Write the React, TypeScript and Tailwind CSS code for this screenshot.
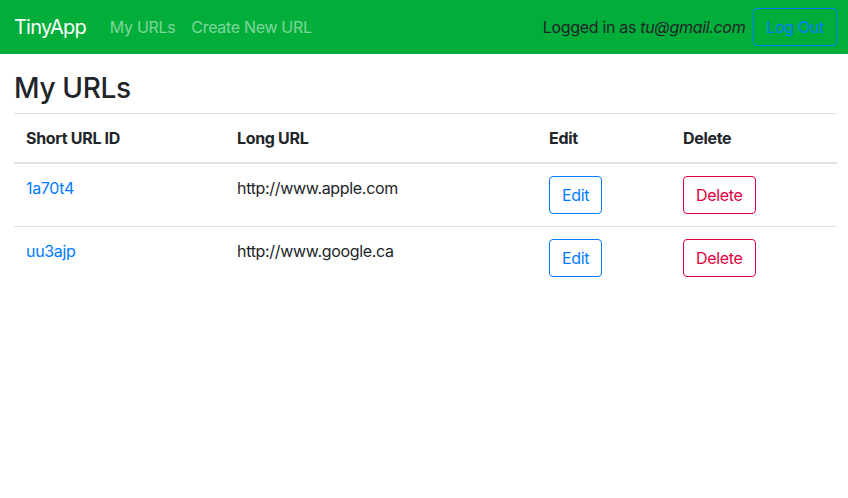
import React from 'react';

type UrlRow = { id: string; longUrl: string };

const urls: UrlRow[] = [
  { id: '1a70t4', longUrl: 'http://www.apple.com' },
  { id: 'uu3ajp', longUrl: 'http://www.google.ca' },
];

export default function App() {
  return (
    <div className="min-h-screen bg-white text-[#212529] font-['Inter','Liberation_Sans',sans-serif] text-[16px] leading-[24px] tracking-[-0.02em]">
      <nav className="h-[54px] bg-[#00ae39] flex items-center pl-[14px] pr-[11px]">
        <a href="/urls" className="text-white text-[20px] leading-[30px] tracking-[-0.04em] mr-[16px]">
          TinyApp
        </a>
        <a href="/urls" className="px-[8px] text-white/50">
          My URLs
        </a>
        <a href="/urls/new" className="px-[8px] text-white/50">
          Create New URL
        </a>
        <div className="ml-auto flex items-center">
          <span>
            Logged in as <em>tu@gmail.com</em>
          </span>
          <button className="ml-[8px] h-[38px] px-[12px] border border-[#007bff] rounded-[4px] text-[#007bff]">
            Log Out
          </button>
        </div>
      </nav>

      <main className="pl-[14px] pr-[11px] pt-[17px]">
        <h3 className="text-[28px] leading-[34px] font-medium mb-[8px]">My URLs</h3>
        <table className="w-[823px] border-collapse text-left">
          <thead>
            <tr className="border-t border-[#dee2e6]">
              <th className="w-[211px] p-[12px] font-bold border-b-2 border-[#dee2e6]">Short URL ID</th>
              <th className="w-[312px] p-[12px] font-bold border-b-2 border-[#dee2e6]">Long URL</th>
              <th className="w-[134px] p-[12px] font-bold border-b-2 border-[#dee2e6]">Edit</th>
              <th className="w-[166px] p-[12px] font-bold border-b-2 border-[#dee2e6]">Delete</th>
            </tr>
          </thead>
          <tbody>
            {urls.map((url, i) => (
              <tr key={url.id} className={i > 0 ? 'border-t border-[#dee2e6]' : ''}>
                <td className="p-[12px] align-top">
                  <a href={`/u/${url.id}`} className="text-[#007bff]">
                    {url.id}
                  </a>
                </td>
                <td className="p-[12px] align-top">{url.longUrl}</td>
                <td className="p-[12px] align-top">
                  <button className="h-[38px] px-[12px] border border-[#007bff] rounded-[4px] text-[#007bff]">
                    Edit
                  </button>
                </td>
                <td className="p-[12px] align-top">
                  <button className="h-[38px] px-[12px] border border-[#e2003c] rounded-[4px] text-[#e2003c]">
                    Delete
                  </button>
                </td>
              </tr>
            ))}
          </tbody>
        </table>
      </main>
    </div>
  );
}
